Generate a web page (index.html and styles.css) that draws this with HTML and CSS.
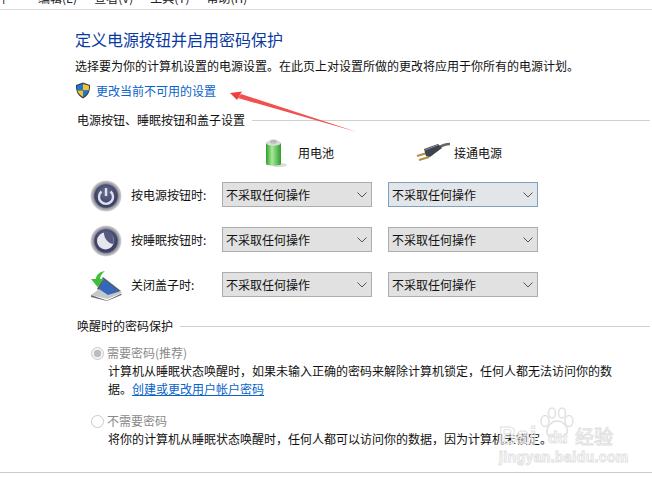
FILE: index.html
```html
<!DOCTYPE html>
<html lang="zh-CN">
<head>
<meta charset="utf-8">
<title>电源选项</title>
<link rel="stylesheet" href="styles.css">
</head>
<body>
<div class="page">
  <nav class="menu"><div class="menu-in"><span class="m0">件(F)</span><span>编辑(E)</span><span>查看(V)</span><span>工具(T)</span><span>帮助(H)</span></div></nav>
  <main class="content">
    <h1 class="title">定义电源按钮并启用密码保护</h1>
    <p class="desc">选择要为你的计算机设置的电源设置。在此页上对设置所做的更改将应用于你所有的电源计划。</p>
    <div class="admin">
      <svg class="shield" width="16" height="17" viewBox="0 0 16 17"><path d="M8 .5 15 3c.3 6-1.500 10.500-7 13.500C2.500 13.500.7 9 1 3z" fill="#33405a"/><path d="M8 2 8 8.500H2.300C2 7 2 5.500 2 3.800z" fill="#1f78cf"/><path d="M8 2l6 1.800c0 1.700 0 3.200-.3 4.700H8z" fill="#f5c42c"/><path d="M8 8.500V15C5 13 3 11 2.300 8.500z" fill="#f5c42c"/><path d="M8 8.500h5.700C13 11 11 13 8 15z" fill="#1f78cf"/></svg>
      <a class="link-plain" href="#">更改当前不可用的设置</a>
    </div>

    <div class="section s1"><span>电源按钮、睡眠按钮和盖子设置</span><i></i></div>

    <div class="grid">
      <div class="head h1">
        <svg width="24" height="30" viewBox="0 0 24 30"><defs><linearGradient id="bat" x1="0" x2="1" y1="0" y2="0"><stop offset="0" stop-color="#2e9d2e"/><stop offset=".4" stop-color="#a8ea96"/><stop offset="1" stop-color="#2f9c30"/></linearGradient></defs><ellipse cx="15" cy="27" rx="8" ry="2" fill="#ddd"/><path d="M2 5h15v21c0 2-15 2-15 0z" fill="url(#bat)"/><ellipse cx="9.500" cy="5" rx="7.500" ry="2.800" fill="#d5ddd5"/><ellipse cx="9.500" cy="3.500" rx="3.500" ry="2" fill="#b9b9c3"/></svg>
        <span>用电池</span>
      </div>
      <div class="head h2">
        <svg width="34" height="20" viewBox="0 0 34 20"><path d="M22 6c3-2 7-4 12-4" stroke="#666" stroke-width="2.500" fill="none"/><path d="M1 14l10-3M3 18l10-3" stroke="#b58f42" stroke-width="2.200"/><path d="M8 7l14-5 4 4-12 9-4-1z" fill="#3f434d"/><path d="M9 8l13-5" stroke="#8a8e98"/></svg>
        <span>接通电源</span>
      </div>

      <div class="row-label">
        <svg class="ico" width="32" height="32" viewBox="0 0 32 32"><defs><radialGradient id="rim"><stop offset=".7" stop-color="#4a4d73"/><stop offset=".8" stop-color="#8f8f98"/><stop offset="1" stop-color="#d8d8dc"/></radialGradient><radialGradient id="core" cx=".5" cy=".35"><stop offset="0" stop-color="#6a6d94"/><stop offset="1" stop-color="#3f4268"/></radialGradient></defs><circle cx="16" cy="16" r="15.500" fill="url(#rim)"/><circle cx="16" cy="16" r="11.500" fill="url(#core)"/><path d="M11.500 11.500a7 7 0 1 0 9 0" fill="none" stroke="#dfe0ea" stroke-width="2.400"/><path d="M16 8v8" stroke="#dfe0ea" stroke-width="2.400"/></svg>
        <span>按电源按钮时:</span>
      </div>
      <div class="sel"><span>不采取任何操作</span><svg width="10" height="6" viewBox="0 0 10 6"><path d="M.5.500 5 5 9.500.500" fill="none" stroke="#555"/></svg></div>
      <div class="sel active"><span>不采取任何操作</span><svg width="10" height="6" viewBox="0 0 10 6"><path d="M.5.500 5 5 9.500.500" fill="none" stroke="#555"/></svg></div>

      <div class="row-label">
        <svg class="ico" width="32" height="32" viewBox="0 0 32 32"><circle cx="16" cy="16" r="15.500" fill="url(#rim)"/><circle cx="16" cy="16" r="11.500" fill="url(#core)"/><circle cx="15.500" cy="16" r="8.500" fill="#e6e6ee"/><path d="M14 7c7-1 11 5 9.500 12-5 0-10-6-9.500-12z" fill="#565980"/></svg>
        <span>按睡眠按钮时:</span>
      </div>
      <div class="sel"><span>不采取任何操作</span><svg width="10" height="6" viewBox="0 0 10 6"><path d="M.5.500 5 5 9.500.500" fill="none" stroke="#555"/></svg></div>
      <div class="sel"><span>不采取任何操作</span><svg width="10" height="6" viewBox="0 0 10 6"><path d="M.5.500 5 5 9.500.500" fill="none" stroke="#555"/></svg></div>

      <div class="row-label">
        <svg class="ico" width="32" height="30" viewBox="0 0 32 30"><path d="M7 18 13 6l18 14-13 6z" fill="#565f6b"/><path d="M9 18 14 8.500l14 11-10 4.500z" fill="#3568bd"/><path d="M1 24 9 18l9 6 13-4 .5 2-14 6z" fill="#c4c8cc"/><path d="M1 24l16 5.500 14.500-7v1.500L17 30 1 26z" fill="#666b72"/><path d="M15 0C9 1 6 4 6 8H1l6.500 8L14 8h-4c0-3 2-6 5-8z" fill="#3cc03c"/></svg>
        <span>关闭盖子时:</span>
      </div>
      <div class="sel"><span>不采取任何操作</span><svg width="10" height="6" viewBox="0 0 10 6"><path d="M.5.500 5 5 9.500.500" fill="none" stroke="#555"/></svg></div>
      <div class="sel"><span>不采取任何操作</span><svg width="10" height="6" viewBox="0 0 10 6"><path d="M.5.500 5 5 9.500.500" fill="none" stroke="#555"/></svg></div>
    </div>

    <div class="section s2"><span>唤醒时的密码保护</span><i></i></div>

    <div class="opt o1">
      <div class="opt-head"><span class="radio on"></span><span>需要密码(推荐)</span></div>
      <p>计算机从睡眠状态唤醒时，如果未输入正确的密码来解除计算机锁定，任何人都无法访问你的数<br>据。<a class="link-under" href="#">创建或更改用户帐户密码</a></p>
    </div>
    <div class="opt o2">
      <div class="opt-head"><span class="radio"></span><span>不需要密码</span></div>
      <p>将你的计算机从睡眠状态唤醒时，任何人都可以访问你的数据，因为计算机未锁定。</p>
    </div>
  </main>
  <div class="bottom"></div>

  <svg class="arrow" width="132" height="44" viewBox="0 0 132 44"><path d="M128 41 12 3 9 7z" fill="#f2504c"/><path d="M1 2 13 .5 8 9z" fill="#f0403c"/></svg>
  <div class="mark">
    <svg class="mark-paw" width="36" height="34" viewBox="0 0 36 34"><g fill="none" stroke="#e0e0e0" stroke-width="1.500"><ellipse cx="6" cy="14" rx="4" ry="5.500"/><ellipse cx="13" cy="6" rx="3.500" ry="5"/><ellipse cx="23" cy="6" rx="3.500" ry="5"/><ellipse cx="30" cy="14" rx="4" ry="5.500"/><path d="M18 14c-6 0-11 7-10 12s18 6 20 0-4-12-10-12z"/></g></svg>
    <span class="mark-a">Bai</span>
    <span class="mark-du">du</span>
    <span class="mark-c">经验</span>
    <span class="mark-b">jingyan.baidu.com</span>
  </div>
</div>
</body>
</html>
```
FILE: styles.css
```css
* { box-sizing: border-box; }
html, body { margin: 0; padding: 0; background: #fff; }
body { font-family: "Noto Sans CJK SC", "Liberation Sans", sans-serif; font-size: 12px; color: #111; }
.page { position: relative; width: 652px; height: 477px; overflow: hidden; }
.menu { height: 10px; border-bottom: 1px solid #ddd; overflow: hidden; }
.menu-in { display: flex; gap: 17px; margin-top: -10px; font-size: 12px; line-height: 16px; color: #222; height: 16px; margin-left: -4px; }
.m0 { width: 25px; }
.content { height: 462px; padding: 18px 0 0 75px; }
.title { margin: 0; font-size: 16px; line-height: 22px; font-weight: 400; color: #0a3aa0; }
.desc { margin: 7px 0 0; line-height: 18px; }
.admin { display: flex; align-items: center; gap: 5px; height: 18px; margin-top: 6px; }
.shield { flex: none; }
.link-plain { color: #0a64c8; text-decoration: none; }
.section { display: flex; align-items: center; gap: 7px; line-height: 18px; margin-left: 2px; }
.section i { flex: 1; height: 1px; background: #d0d0d0; margin-right: 2px; }
.s1 { margin-top: 12px; }
.s2 { margin-top: 10px; }
.grid { display: grid; grid-template-columns: 131px 150px 150px; column-gap: 16px; row-gap: 20px; grid-template-rows: 34px 25px 25px 25px; height: 178px; }
.head { display: flex; align-items: center; }
.h1 { grid-column: 2; margin: 6px 0 -7px 42px; gap: 10px; }
.h2 { grid-column: 3; margin: 6px 0 -6px 28px; gap: 4px; }
.row-label { display: flex; align-items: center; gap: 9px; margin-left: 15px; white-space: nowrap; }
.row-label span { margin-top: -2px; }
.ico { flex: none; }
.sel { display: flex; align-items: center; justify-content: space-between; height: 25px; margin-top: -1px; padding: 0 4px 0 3px; background: #e1e1e1; border: 1px solid #adadad; }
.sel.active { background: #e3e6e9; border-color: #7d9fc0; }
.opt { margin-left: 16px; }
.opt-head { display: flex; align-items: center; gap: 3px; color: #8a8a8a; line-height: 18px; }
.radio { width: 13px; height: 13px; border-radius: 50%; border: 1px solid #c9c9c9; background: #fff; flex: none; }
.radio.on { background: radial-gradient(circle, #bdbdbd 0 3.500px, #f4f4f4 4px); }
.opt p { margin: 0 0 0 17px; line-height: 18px; width: 520px; white-space: nowrap; }
.o1 { margin-top: 9px; }
.o2 { margin-top: 14px; }
.link-under { color: #0a64c8; text-decoration: underline; }
.bottom { height: 1px; background: #ccc; }
.arrow { position: absolute; left: 229px; top: 91px; }
.mark { position: absolute; left: 498px; top: 405px; width: 122px; height: 60px; color: rgba(255,255,255,.4); -webkit-text-stroke: 1px #e2e2e2; font-family: "Liberation Sans", sans-serif; font-weight: 700; white-space: nowrap; }
.mark-paw { position: absolute; left: 41px; top: 2px; }
.mark-a { position: absolute; left: 1px; top: 17px; font-size: 24px; line-height: 28px; }
.mark-du { position: absolute; left: 50px; top: 23px; font-size: 16px; line-height: 20px; }
.mark-c { position: absolute; left: 77px; top: 19px; font-size: 19px; line-height: 24px; font-family: "Noto Sans CJK SC", sans-serif; font-weight: 400; }
.mark-b { position: absolute; left: 1px; top: 44px; font-size: 14px; line-height: 16px; letter-spacing: .4px; }
```
